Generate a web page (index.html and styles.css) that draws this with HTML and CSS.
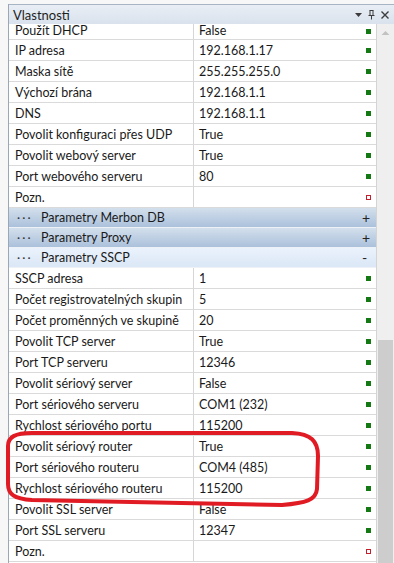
FILE: index.html
```html
<!DOCTYPE html>
<html lang="cs">
<head>
  <meta charset="UTF-8">
  <meta name="viewport" content="width=device-width, initial-scale=1.0">
  <title>Vlastnosti</title>
  <link rel="stylesheet" href="styles.css">
</head>
<body>
  <div class="window">
    <div class="panel">
      <div class="panel-header">
        <span class="panel-title">Vlastnosti</span>
        <span class="panel-tools">
          <svg class="tool" width="9" height="9" viewBox="0 0 9 9"><path d="M1 3h7L4.5 7z" fill="#3c3c3c"/></svg>
          <svg class="tool" width="9" height="11" viewBox="0 0 9 11"><path d="M2.5 1.5h4M3 1.5v5M6 1.5v5M1.5 6.5h6M4.5 6.5v4" stroke="#3c3c3c" stroke-width="1" fill="none"/></svg>
          <svg class="tool" width="10" height="10" viewBox="0 0 10 10"><path d="M1.5 1.5l7 7M8.5 1.5l-7 7" stroke="#3c3c3c" stroke-width="1.4" fill="none"/></svg>
        </span>
      </div>

      <div class="panel-body">
        <div class="grid">
          <div class="row partial"><span class="name">Použít DHCP</span><span class="value">False</span><span class="mark ok"></span></div>
          <div class="row"><span class="name">IP adresa</span><span class="value">192.168.1.17</span><span class="mark ok"></span></div>
          <div class="row"><span class="name">Maska sítě</span><span class="value">255.255.255.0</span><span class="mark ok"></span></div>
          <div class="row"><span class="name">Výchozí brána</span><span class="value">192.168.1.1</span><span class="mark ok"></span></div>
          <div class="row"><span class="name">DNS</span><span class="value">192.168.1.1</span><span class="mark ok"></span></div>
          <div class="row"><span class="name">Povolit konfiguraci přes UDP</span><span class="value">True</span><span class="mark ok"></span></div>
          <div class="row"><span class="name">Povolit webový server</span><span class="value">True</span><span class="mark ok"></span></div>
          <div class="row"><span class="name">Port webového serveru</span><span class="value">80</span><span class="mark ok"></span></div>
          <div class="row"><span class="name">Pozn.</span><span class="value"></span><span class="mark empty"></span></div>

          <div class="group closed"><span class="dots">· · ·</span><span class="group-name">Parametry Merbon DB</span><span class="toggle">+</span></div>
          <div class="group closed"><span class="dots">· · ·</span><span class="group-name">Parametry Proxy</span><span class="toggle">+</span></div>
          <div class="group open"><span class="dots">· · ·</span><span class="group-name">Parametry SSCP</span><span class="toggle">-</span></div>

          <div class="row"><span class="name">SSCP adresa</span><span class="value">1</span><span class="mark ok"></span></div>
          <div class="row"><span class="name">Počet registrovatelných skupin</span><span class="value">5</span><span class="mark ok"></span></div>
          <div class="row"><span class="name">Počet proměnných ve skupině</span><span class="value">20</span><span class="mark ok"></span></div>
          <div class="row"><span class="name">Povolit TCP server</span><span class="value">True</span><span class="mark ok"></span></div>
          <div class="row"><span class="name">Port TCP serveru</span><span class="value">12346</span><span class="mark ok"></span></div>
          <div class="row"><span class="name">Povolit sériový server</span><span class="value">False</span><span class="mark ok"></span></div>
          <div class="row"><span class="name">Port sériového serveru</span><span class="value">COM1 (232)</span><span class="mark ok"></span></div>
          <div class="row"><span class="name">Rychlost sériového portu</span><span class="value">115200</span><span class="mark ok"></span></div>
          <div class="row"><span class="name">Povolit sériový router</span><span class="value">True</span><span class="mark ok"></span></div>
          <div class="row"><span class="name">Port sériového routeru</span><span class="value">COM4 (485)</span><span class="mark ok"></span></div>
          <div class="row"><span class="name">Rychlost sériového routeru</span><span class="value">115200</span><span class="mark ok"></span></div>
          <div class="row"><span class="name">Povolit SSL server</span><span class="value">False</span><span class="mark ok"></span></div>
          <div class="row"><span class="name">Port SSL serveru</span><span class="value">12347</span><span class="mark ok"></span></div>
          <div class="row"><span class="name">Pozn.</span><span class="value"></span><span class="mark empty"></span></div>
        </div>

        <div class="scrollbar">
          <div class="scroll-up">
            <svg width="9" height="6" viewBox="0 0 9 6"><path d="M0.5 5h8L4.5 1z" fill="#c2c2c2"/></svg>
          </div>
          <div class="scroll-track"></div>
          <div class="scroll-thumb"></div>
        </div>
      </div>
    </div>

    <!-- red marker drawn over the screenshot -->
    <svg class="highlight" width="394" height="563" viewBox="0 0 394 563">
      <path d="M32 433 L292 433 C311 434 318 441 318 456 L317 489 C316 500 306 503 282 505 L32 500 C14 499 8 494 8 484 L8 446 C8 437 15 433 32 433 Z"
            fill="none" stroke="#e01b24" stroke-width="4" stroke-linejoin="round"/>
    </svg>
  </div>
</body>
</html>
```

FILE: styles.css
```css
* {
  box-sizing: border-box;
  margin: 0;
  padding: 0;
}

body {
  background: #f7f7f7;
  font-family: "Segoe UI", Lato, "Liberation Sans", sans-serif;
  font-size: 12.5px;
  color: #1a1a1a;
  overflow: hidden;
}

.window {
  position: relative;
  width: 394px;
  height: 563px;
  padding: 4px 0 0 8px;
}

.panel {
  display: flex;
  flex-direction: column;
  height: 100%;
  border-left: 1px solid #9ba7b6;
}

.panel-header {
  display: flex;
  align-items: center;
  justify-content: space-between;
  height: 20px;
  padding: 0 4px;
  border-top: 1px solid #a7b4c4;
  background: linear-gradient(#e9eef5, #d9e2ed);
}

.panel-title {
  font-size: 13px;
  line-height: 16px;
  color: #1e1e1e;
}

.panel-tools {
  display: flex;
  align-items: center;
  gap: 4px;
}

.panel-body {
  flex: 1;
  display: flex;
  min-height: 0;
}

.grid {
  flex: 1;
  overflow: hidden;
  background: #fff;
  border-right: 1px solid #d4d4d4;
}

.row {
  display: flex;
  align-items: center;
  height: 21px;
  line-height: 19px;
  border-bottom: 1px solid #dadada;
}

.row.partial {
  height: 16px;
  line-height: 14px;
}

.row.partial .name,
.row.partial .value {
  padding-top: 0;
}

.name {
  width: 185px;
  height: 100%;
  padding: 1px 0 0 6px;
  border-right: 1px solid #d6d6d6;
  white-space: nowrap;
  overflow: hidden;
}

.value {
  flex: 1;
  height: 100%;
  padding: 1px 0 0 5px;
  white-space: nowrap;
}

.mark {
  width: 5px;
  height: 5px;
  margin-right: 5px;
}

.mark.ok {
  background: #137a13;
}

.mark.empty {
  border: 1px solid #c41d2c;
}

.group {
  display: flex;
  align-items: center;
  height: 20px;
  border-bottom: 1px solid #eef2f7;
}

.group.closed {
  background: linear-gradient(#d3dfec, #abc1db);
}

.group.open {
  background: linear-gradient(#eaf2fc, #dbe7f6);
}

.dots {
  width: 32px;
  padding-left: 8px;
  font-size: 12px;
  letter-spacing: -0.5px;
  color: #333;
}

.group-name {
  flex: 1;
}

.toggle {
  width: 14px;
  font-size: 14px;
  color: #222;
}

.scrollbar {
  display: flex;
  flex-direction: column;
  width: 17px;
  background: #efefef;
}

.scroll-up {
  display: flex;
  justify-content: center;
  padding-top: 6px;
  height: 17px;
}

.scroll-track {
  height: 299px;
}

.scroll-thumb {
  flex: 1;
  margin: 0 1px;
  background: #cdcdcd;
}

.highlight {
  position: absolute;
  top: 0;
  left: 0;
  pointer-events: none;
}
```
